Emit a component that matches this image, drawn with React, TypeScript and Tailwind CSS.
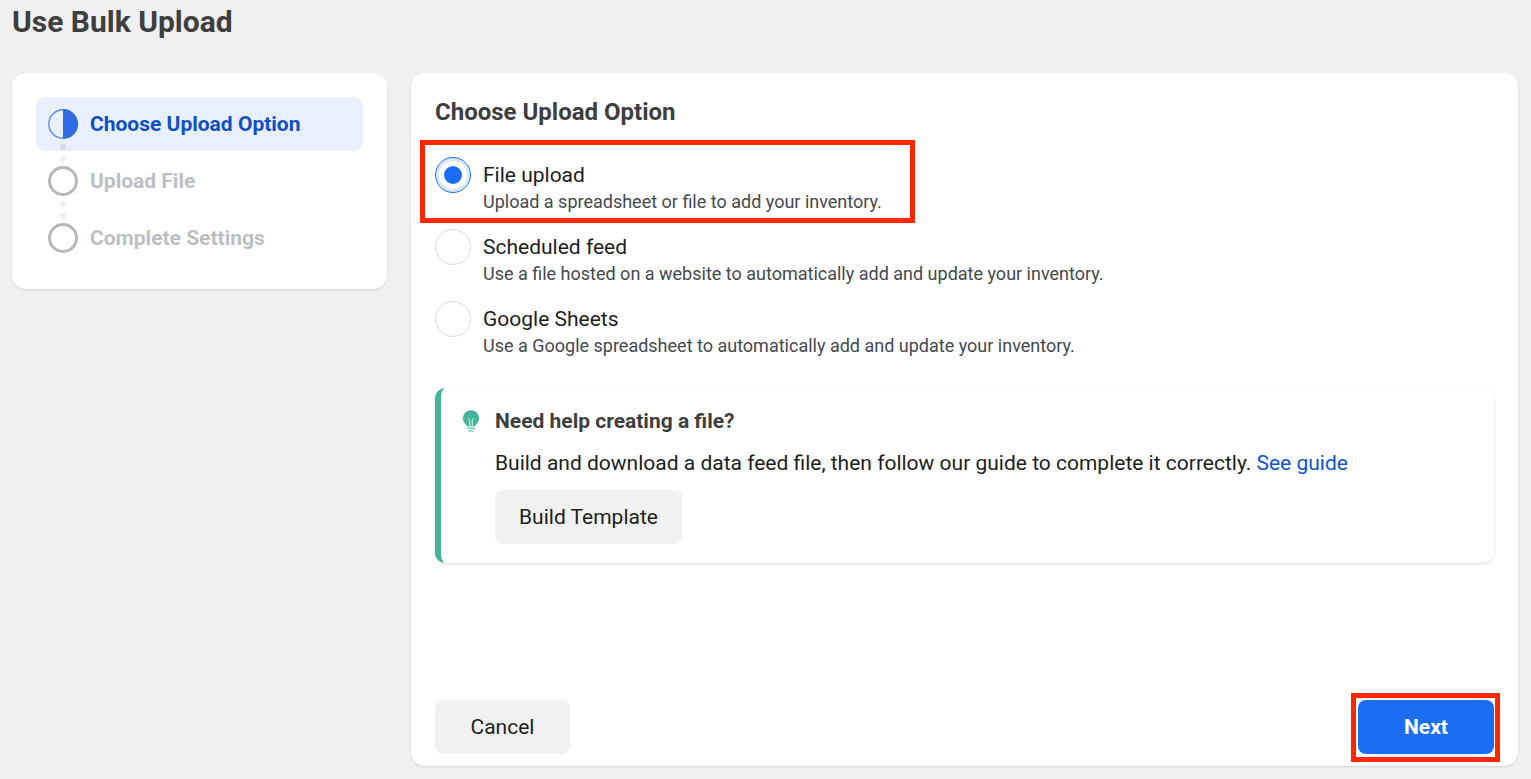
import React from "react";

const steps = [
  { label: "Choose Upload Option", active: true },
  { label: "Upload File", active: false },
  { label: "Complete Settings", active: false },
];

const options = [
  { title: "File upload", text: "Upload a spreadsheet or file to add your inventory.", checked: true },
  { title: "Scheduled feed", text: "Use a file hosted on a website to automatically add and update your inventory.", checked: false },
  { title: "Google Sheets", text: "Use a Google spreadsheet to automatically add and update your inventory.", checked: false },
];

function HalfCircle() {
  return (
    <svg width="32" height="32" viewBox="0 0 32 32" className="shrink-0">
      <circle cx="16" cy="16" r="14.2" fill="#e7f0fc" stroke="#5b8def" strokeWidth="1.4" />
      <path d="M16 1a15 15 0 0 1 0 30z" fill="#2f6be4" />
    </svg>
  );
}

function StepItem({ label, active, index }: { label: string; active: boolean; index: number }) {
  return (
    <div className={`relative flex h-[54px] items-center gap-[11px] rounded-[10px] pl-[11px] ${active ? "bg-[#e7f0fc]" : ""}`}>
      {active ? (
        <HalfCircle />
      ) : (
        <div className="ml-px mr-px h-[30px] w-[30px] shrink-0 rounded-full border-[3px] border-[#b4b7bb]" />
      )}
      <span className={`pt-[2px] text-[21px] font-bold ${active ? "text-[#0f4fc4]" : "text-[#bcc0c4]"}`}>{label}</span>
      {index < 2 && (
        <>
          <div className={`absolute left-[24px] top-[47px] h-[6px] w-[6px] rounded-full ${active ? "bg-[#d3dae4]" : "bg-[#edeef0]"}`} />
          <div className="absolute left-[24px] top-[59px] h-[6px] w-[6px] rounded-full bg-[#edeef0]" />
        </>
      )}
    </div>
  );
}

function Radio({ checked }: { checked: boolean }) {
  if (checked) {
    return (
      <div className="flex h-9 w-9 shrink-0 items-center justify-center rounded-full border border-[#1b6ef3] bg-[#fff] shadow-[inset_0_0_0_3px_#dbe7fb]">
        <div className="h-[18px] w-[18px] rounded-full bg-[#1b6ef3]" />
      </div>
    );
  }
  return <div className="h-9 w-9 shrink-0 rounded-full border border-[#d9dbde] bg-white" />;
}

function Bulb() {
  return (
    <svg width="18" height="24" viewBox="0 0 20 26" className="mt-px shrink-0">
      <path d="M10 1a9 9 0 0 0-9 9c0 3.2 1.6 5 3 6.6.8.9 1.4 1.7 1.5 2.4h9c.1-.7.7-1.5 1.5-2.4 1.4-1.6 3-3.4 3-6.6a9 9 0 0 0-9-9z" fill="#45b59a" />
      <path d="M7 10l1.6 2.4V19M13 10l-1.6 2.4V19" fill="none" stroke="#fff" strokeWidth="1" />
      <rect x="5.5" y="20.5" width="9" height="1.5" rx=".75" fill="#6cc5b0" />
      <rect x="6.5" y="23.2" width="7" height="1.5" rx=".75" fill="#6cc5b0" />
    </svg>
  );
}

export default function App() {
  return (
    <div className="h-[779px] w-[1531px] overflow-hidden bg-[#f0f0f0] font-['Roboto',sans-serif] text-[#1c1e21]">
      <h1 className="h-[73px] pl-3 pt-[2px] text-[30px] font-bold leading-[40px] text-[#3e3e3e]">Use Bulk Upload</h1>
      <div className="flex items-start gap-6 pl-3 pr-[13px]">
        <aside className="flex w-[375px] shrink-0 flex-col gap-[3px] rounded-[14px] bg-white p-6 shadow-[0_1px_2px_rgba(0,0,0,0.12)]">
          {steps.map((s, i) => (
            <StepItem key={s.label} label={s.label} active={s.active} index={i} />
          ))}
        </aside>

        <main className="flex h-[693px] flex-1 flex-col rounded-[14px] bg-white px-6 pb-3 pt-[24px] shadow-[0_1px_2px_rgba(0,0,0,0.12)]">
          <h2 className="h-[32px] text-[24px] font-bold leading-[30px] text-[#3e3e3e]">Choose Upload Option</h2>
          <div className="mt-[28px] flex flex-col gap-[15px]">
            {options.map((o) => (
              <div key={o.title} className="flex h-[57px] gap-3">
                <Radio checked={o.checked} />
                <div className="pt-[3px]">
                  <div className="text-[21px] leading-[30px] text-[#1c1e21]">{o.title}</div>
                  <div className="text-[18px] leading-[24px] text-[#444950]">{o.text}</div>
                </div>
              </div>
            ))}
          </div>

          <div className="mt-[30px] flex h-[175px] gap-[15px] rounded-[10px] border-l-[6px] border-[#45b59a] bg-white pl-[21px] pt-5 shadow-[0_1px_3px_rgba(0,0,0,0.14)]">
            <Bulb />
            <div>
              <div className="text-[21px] font-bold leading-[26px] text-[#3e3e3e]">Need help creating a file?</div>
              <div className="mt-[16px] text-[21px] leading-[26px] text-[#1c1e21]">
                Build and download a data feed file, then follow our guide to complete it correctly.{" "}
                <span className="text-[#0f55c8]">See guide</span>
              </div>
              <button className="mt-[14px] h-[54px] w-[187px] rounded-[8px] bg-[#f1f1f1] pt-[2px] text-[21px] text-[#1c1e21]">Build Template</button>
            </div>
          </div>

          <div className="mt-auto flex justify-between">
            <button className="h-[54px] w-[135px] rounded-[8px] bg-[#f1f1f1] pt-[2px] text-[21px] text-[#1c1e21]">Cancel</button>
            <button className="h-[54px] w-[136px] rounded-[8px] bg-[#1b6ef3] pt-[2px] text-[21px] font-bold text-white">Next</button>
          </div>
        </main>
      </div>

      {/* red annotation boxes drawn over the screenshot */}
      <div className="absolute left-[420px] top-[140px] h-[83px] w-[495px] border-[5px] border-[#ff2600]" />
      <div className="absolute left-[1351px] top-[693px] h-[69px] w-[149px] border-[5px] border-[#ff2600]" />
    </div>
  );
}
